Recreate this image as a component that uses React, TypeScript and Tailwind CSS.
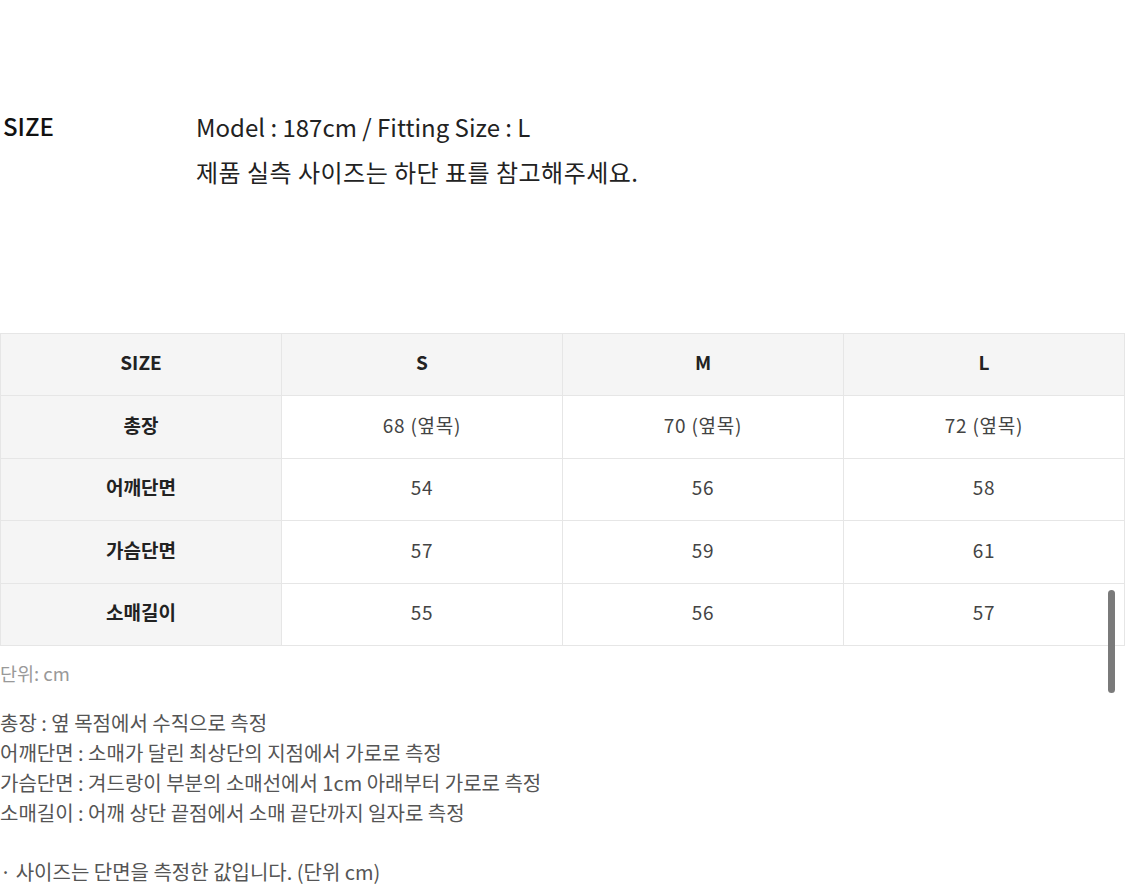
import React from 'react'

const SIZES = ['S', 'M', 'L']

const ROWS = [
  { label: '총장', values: ['68 (옆목)', '70 (옆목)', '72 (옆목)'], h: 'h-[63px]' },
  { label: '어깨단면', values: ['54', '56', '58'], h: 'h-[62px]' },
  { label: '가슴단면', values: ['57', '59', '61'], h: 'h-[63px]' },
  { label: '소매길이', values: ['55', '56', '57'], h: 'h-[62px]' },
]

const NOTES = [
  '총장 : 옆 목점에서 수직으로 측정',
  '어깨단면 : 소매가 달린 최상단의 지점에서 가로로 측정',
  '가슴단면 : 겨드랑이 부분의 소매선에서 1cm 아래부터 가로로 측정',
  '소매길이 : 어깨 상단 끝점에서 소매 끝단까지 일자로 측정',
]

const font = "font-['Noto_Sans_CJK_KR','Noto_Sans',sans-serif]"

const SizeTable = () => (
  <table className="w-[1125px] border-collapse table-fixed">
    <thead>
      <tr className="h-[62px] bg-[#f5f5f5]">
        <th className="border border-[#e6e6e6] pb-[4px] text-[19px] font-bold text-[#222]">
          SIZE
        </th>
        {SIZES.map((s) => (
          <th
            key={s}
            className="border border-[#e6e6e6] pb-[4px] text-[19px] font-bold text-[#222]"
          >
            {s}
          </th>
        ))}
      </tr>
    </thead>
    <tbody>
      {ROWS.map((row) => (
        <tr key={row.label} className={row.h}>
          <td className="border border-[#e6e6e6] bg-[#f5f5f5] pb-[4px] text-center text-[19px] font-bold text-[#222]">
            {row.label}
          </td>
          {row.values.map((v, i) => (
            <td
              key={i}
              className="border border-[#e6e6e6] pb-[4px] text-center text-[19px] tracking-[0.04em] text-[#444]"
            >
              {v}
            </td>
          ))}
        </tr>
      ))}
    </tbody>
  </table>
)

const App = () => (
  <div className={`${font} relative w-[1125px] h-[884px] overflow-hidden bg-white`}>
    <div className="flex pt-[109px]">
      <div className="w-[196px] pl-[3px] text-[24px] font-medium text-[#111] leading-[34px]">
        SIZE
      </div>
      <div className="text-[24px] text-[#222] leading-[45px] -mt-[5px]">
        <p>Model : 187cm / Fitting Size : L</p>
        <p className="tracking-[0.02em]">제품 실측 사이즈는 하단 표를 참고해주세요.</p>
      </div>
    </div>

    <div className="mt-[139px]">
      <SizeTable />
    </div>

    <p className="mt-[15px] text-[18.5px] text-[#999] leading-[24px]">단위: cm</p>

    <div className="mt-[23px] text-[20px] text-[#555] leading-[30px]">
      {NOTES.map((n) => (
        <p key={n}>{n}</p>
      ))}
    </div>

    <p className="mt-[33px] text-[20px] text-[#555] leading-[22px]">
      · 사이즈는 단면을 측정한 값입니다. (단위 cm)
    </p>

    {/* scrollbar thumb */}
    <div className="absolute left-[1108px] top-[590px] w-[7px] h-[103px] rounded-full bg-[#7a7a7a]" />
  </div>
)

export default App
